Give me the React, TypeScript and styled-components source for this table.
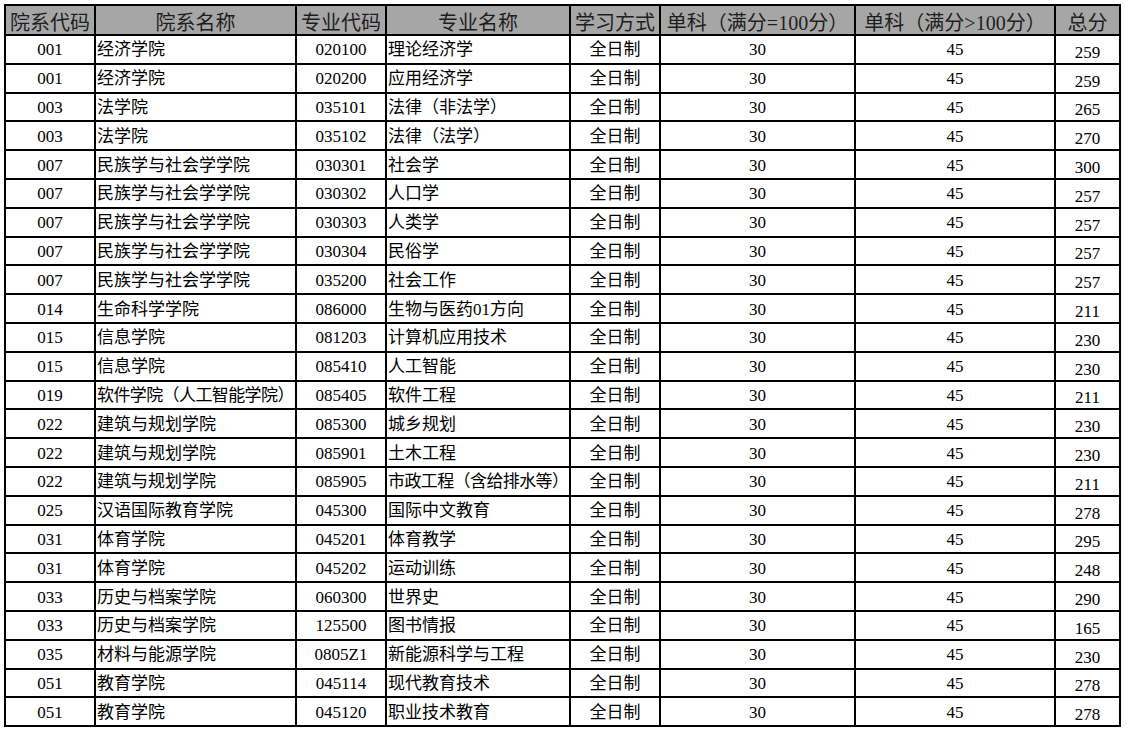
import React from 'react'
import styled, { createGlobalStyle } from 'styled-components'

const GlobalStyle = createGlobalStyle`
  html, body {
    margin: 0;
    padding: 0;
    background: #ffffff;
  }
  body {
    font-family: "Liberation Serif", "Noto Sans CJK SC", serif;
  }
`

const Page = styled.div`
  padding: 4px 0 0 4px;
`

const Sheet = styled.table`
  border-collapse: separate;
  border-spacing: 0;
  table-layout: fixed;
  width: 1117px;
  border-top: 2px solid #000;
  border-left: 2px solid #000;
  font-family: "Liberation Serif", "Noto Sans CJK SC", serif;
  color: #000;
`

const HeadRow = styled.tr`
  height: 30px;
`

const Row = styled.tr`
  height: 28.8px;
`

const HeadCell = styled.th`
  box-sizing: border-box;
  background: #a6a6a6;
  color: #1e1e1e;
  font-weight: normal;
  font-size: 20px;
  line-height: 20px;
  padding: 0 0 1px;
  vertical-align: bottom;
  text-align: center;
  white-space: nowrap;
  overflow: hidden;
  border-right: 2px solid #000;
  border-bottom: 2px solid #000;
`

const Cell = styled.td<{ $align?: 'left' | 'center'; $low?: boolean; $tight?: boolean }>`
  box-sizing: border-box;
  font-size: 17px;
  line-height: 18px;
  padding: ${(p) => (p.$low ? '0 0 1px' : p.$align === 'left' ? '2px 0 0 1px' : '2px 0 0')};
  vertical-align: ${(p) => (p.$low ? 'bottom' : 'middle')};
  text-align: ${(p) => p.$align ?? 'center'};
  letter-spacing: ${(p) => (p.$tight ? '-0.6px' : 'normal')};
  white-space: nowrap;
  overflow: hidden;
  border-right: 2px solid #000;
  border-bottom: 2px solid #000;
`

const widths = [90, 201, 90, 184, 90, 195, 200, 65]

const headers = [
  '院系代码',
  '院系名称',
  '专业代码',
  '专业名称',
  '学习方式',
  '单科（满分=100分）',
  '单科（满分>100分）',
  '总分',
]

type Entry = [string, string, string, string, string]

const MINZU = '民族学与社会学学院'
const JIANZHU = '建筑与规划学院'
const LISHI = '历史与档案学院'

const rows: Entry[] = [
  ['001', '经济学院', '020100', '理论经济学', '259'],
  ['001', '经济学院', '020200', '应用经济学', '259'],
  ['003', '法学院', '035101', '法律（非法学）', '265'],
  ['003', '法学院', '035102', '法律（法学）', '270'],
  ['007', MINZU, '030301', '社会学', '300'],
  ['007', MINZU, '030302', '人口学', '257'],
  ['007', MINZU, '030303', '人类学', '257'],
  ['007', MINZU, '030304', '民俗学', '257'],
  ['007', MINZU, '035200', '社会工作', '257'],
  ['014', '生命科学学院', '086000', '生物与医药01方向', '211'],
  ['015', '信息学院', '081203', '计算机应用技术', '230'],
  ['015', '信息学院', '085410', '人工智能', '230'],
  ['019', '软件学院（人工智能学院）', '085405', '软件工程', '211'],
  ['022', JIANZHU, '085300', '城乡规划', '230'],
  ['022', JIANZHU, '085901', '土木工程', '230'],
  ['022', JIANZHU, '085905', '市政工程（含给排水等）', '211'],
  ['025', '汉语国际教育学院', '045300', '国际中文教育', '278'],
  ['031', '体育学院', '045201', '体育教学', '295'],
  ['031', '体育学院', '045202', '运动训练', '248'],
  ['033', LISHI, '060300', '世界史', '290'],
  ['033', LISHI, '125500', '图书情报', '165'],
  ['035', '材料与能源学院', '0805Z1', '新能源科学与工程', '230'],
  ['051', '教育学院', '045114', '现代教育技术', '278'],
  ['051', '教育学院', '045120', '职业技术教育', '278'],
]

// long names in the reference run right up to the cell border
const isLong = (s: string) => s.length > 10

export default function App() {
  return (
    <>
      <GlobalStyle />
      <Page>
        <Sheet>
          <colgroup>
            {widths.map((w, i) => (
              <col key={i} style={{ width: w }} />
            ))}
          </colgroup>
          <thead>
            <HeadRow>
              {headers.map((h) => (
                <HeadCell key={h}>{h}</HeadCell>
              ))}
            </HeadRow>
          </thead>
          <tbody>
            {rows.map(([code, dept, major, name, total], i) => (
              <Row key={i}>
                <Cell>{code}</Cell>
                <Cell $align="left" $tight={isLong(dept)}>
                  {dept}
                </Cell>
                <Cell>{major}</Cell>
                <Cell $align="left" $tight={isLong(name)}>
                  {name}
                </Cell>
                <Cell>全日制</Cell>
                <Cell>30</Cell>
                <Cell>45</Cell>
                <Cell $low>{total}</Cell>
              </Row>
            ))}
          </tbody>
        </Sheet>
      </Page>
    </>
  )
}
